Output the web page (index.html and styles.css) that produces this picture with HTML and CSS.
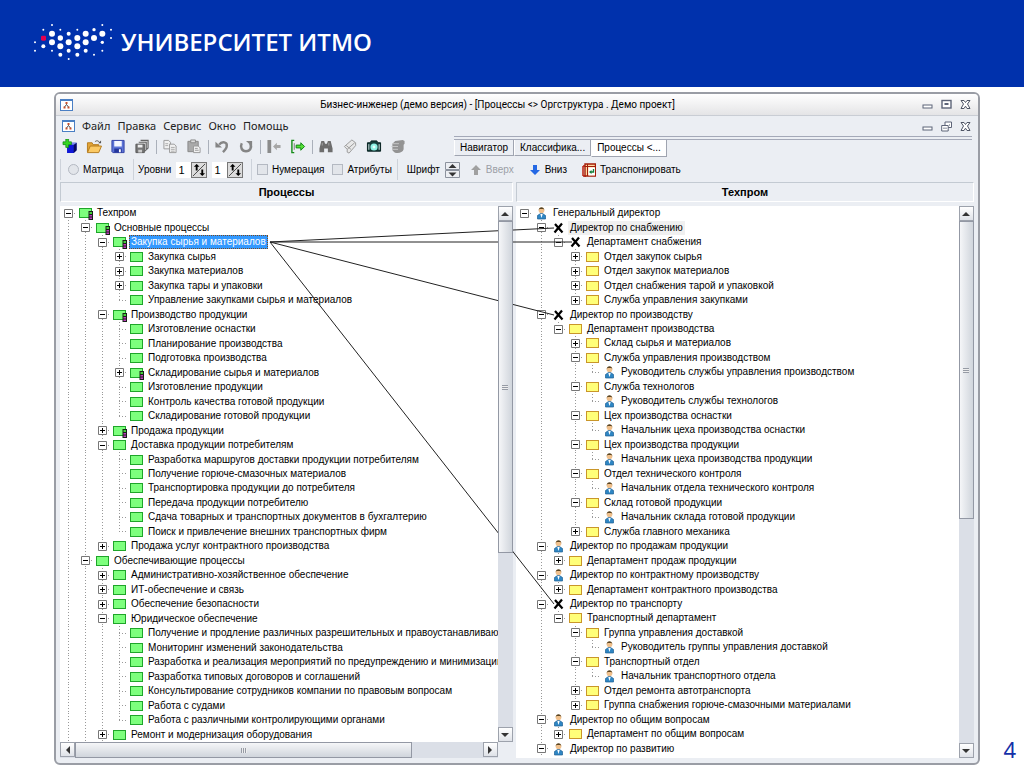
FILE: index.html
```html
<!DOCTYPE html>
<html lang="ru">
<head>
<meta charset="utf-8">
<title>Бизнес-инженер</title>
<link rel="stylesheet" href="styles.css">
</head>
<body>
<header class="banner">
  <svg class="banner-logo" viewBox="38 70 240 114" aria-hidden="true">
    <g id="dots" fill="#fff"></g>
    <rect x="62" y="108" width="15" height="15" rx="4" fill="#e3004f"/>
  </svg>
  <h1 class="banner-title">УНИВЕРСИТЕТ ИТМО</h1>
</header>
<main class="slide">
  <section class="window">
    <div class="titlebar">
      <svg class="app-icon" viewBox="0 0 13 12"><rect x=".5" y=".5" width="12" height="11" fill="#fff" stroke="#4a7fc4"/><path d="M1 1.500h11" stroke="#4a7fc4"/><path d="M6.500 3.500v2M4.500 8l2-2.500 2 2.500" stroke="#555" fill="none"/><path d="M5.500 3h2v2h-2zM3.500 7.500h2v2h-2zM7.500 7.500h2v2h-2z" fill="#c8502a"/></svg>
      <h2 class="window-title">Бизнес-инженер (демо версия) - [Процессы &lt;&gt; Оргструктура . Демо проект]</h2>
      <div class="window-buttons">
        <button aria-label="Свернуть"><svg viewBox="0 0 11 11"><rect x="1" y="6" width="9" height="3" fill="#fff" stroke="#5d6478"/></svg></button>
        <button aria-label="Развернуть"><svg viewBox="0 0 11 11"><rect x="1" y="1.500" width="9" height="7.500" fill="#fff" stroke="#5d6478" stroke-width="1.400"/><path d="M3.500 4h4v2h-4z" fill="#5d6478"/></svg></button>
        <button aria-label="Закрыть"><svg viewBox="0 0 11 11"><path d="M1 1.500h3l1.500 2 1.500-2h3L7.500 5 10 9.500H7L5.500 7.200 4 9.500H1L3.500 5z" fill="#fff" stroke="#4f5566"/></svg></button>
      </div>
    </div>
    <div class="menubar">
      <svg class="app-icon" viewBox="0 0 13 12"><rect x=".5" y=".5" width="12" height="11" fill="#fff" stroke="#4a7fc4"/><path d="M1 1.500h11" stroke="#4a7fc4"/><path d="M6.500 3.500v2M4.500 8l2-2.500 2 2.500" stroke="#555" fill="none"/><path d="M5.500 3h2v2h-2zM3.500 7.500h2v2h-2zM7.500 7.500h2v2h-2z" fill="#c8502a"/></svg>
      <nav class="menu">
        <button>Файл</button><button>Правка</button><button>Сервис</button><button>Окно</button><button>Помощь</button>
      </nav>
      <div class="window-buttons">
        <button aria-label="Свернуть документ"><svg viewBox="0 0 11 11"><rect x="1" y="6" width="9" height="3" fill="#fff" stroke="#5d6478"/></svg></button>
        <button aria-label="Восстановить документ"><svg viewBox="0 0 11 11"><path d="M4 1h6.500v5.500H4z" fill="#fff" stroke="#5d6478"/><path d="M.7 4.500h6.500V10H.7z" fill="#fff" stroke="#5d6478"/><path d="M2.500 6.500h1v1.500h-1zM4.500 6.500h1v1.500h-1zM8 3.500h1v1H8z" fill="#5d6478"/></svg></button>
        <button aria-label="Закрыть документ"><svg viewBox="0 0 11 11"><path d="M1 1.500h3l1.500 2 1.500-2h3L7.500 5 10 9.500H7L5.500 7.200 4 9.500H1L3.500 5z" fill="#fff" stroke="#4f5566"/></svg></button>
      </div>
    </div>
    <div class="tools">
      <div class="toolbar">
        <button aria-label="Создать"><svg viewBox="0 0 16 16"><path d="M5 6l3-2h7v8l-3 3H5z" fill="#1626b8"/><path d="M5 6h7v9H5z" fill="#1018d8"/><path d="M12 6l3-2v8l-3 3z" fill="#06085e"/><path d="M5 6l3-2h7l-3 2z" fill="#7d8df0"/><path d="M3.500 0h3v3h3v3h-3v3h-3V6h-3V3h3z" fill="#35d622" stroke="#0b7a10" stroke-width=".7"/></svg></button>
        <button aria-label="Открыть"><svg viewBox="0 0 16 16"><path d="M1 14V4h5l1 2h6v2" fill="#e2a436" stroke="#b37a1c"/><path d="M1 14.500L4 7.500h12L13 14.500z" fill="#fbc964" stroke="#b37a1c"/><path d="M9 3c2-2 4-1 5 1" fill="none" stroke="#555"/><path d="M12.500 4.500h3V1.500z" fill="#555"/></svg></button>
        <button aria-label="Сохранить"><svg viewBox="0 0 16 16"><path d="M1.500 1.500h13v13h-12l-1-1z" fill="#5d74d6" stroke="#3140a4"/><path d="M4 2h8v6H4z" fill="#f4f6ff"/><path d="M4 10h8v4.500H4z" fill="#24369c"/><path d="M9 11h2v3H9z" fill="#fff"/></svg></button>
        <button aria-label="Сохранить все"><svg viewBox="0 0 16 16"><path d="M6.500 1.500h8v8l-1.500 1.500M4.500 3.500h8v8L11 13" fill="#ddd" stroke="#666" stroke-width="1.200"/><path d="M1.500 5.500h9v9h-9z" fill="#777" stroke="#555"/><path d="M3.500 6h5v3h-5z" fill="#eee"/><path d="M4 11.500h4v3H4z" fill="#ccc"/></svg></button>
        <i class="separator"></i>
        <button aria-label="Копировать"><svg viewBox="0 0 16 16"><g fill="#f0f0f0" stroke="#999"><path d="M1.500 1.500h5l2 2v7h-7z"/><path d="M7.500 5.500h5l2 2v7h-7z"/></g><path d="M3 5h3M3 7h3M9 9h4M9 11h4M9 13h4" stroke="#aaa"/></svg></button>
        <button aria-label="Вставить"><svg viewBox="0 0 16 16"><path d="M1.500 2.500h11v11h-11z" fill="#aaa" stroke="#888"/><path d="M4.500 1h5v3h-5z" fill="#ddd" stroke="#888"/><path d="M7.500 7.500h5l2 2v5h-7z" fill="#f2f2f2" stroke="#999"/><path d="M9 10h3M9 12h4" stroke="#999"/></svg></button>
        <i class="separator"></i>
        <button aria-label="Отменить"><svg viewBox="0 0 16 16"><path d="M5 6c3-4 9-3 8 2 0 2-2 4-4 6" fill="none" stroke="#858585" stroke-width="2.600"/><path d="M1 3v6h7z" fill="#858585"/></svg></button>
        <button aria-label="Повторить"><svg viewBox="0 0 16 16"><path d="M3.500 4.500c-2 4 0 8.500 4.500 8.500s6.500-4 4.500-8" fill="none" stroke="#858585" stroke-width="2.600"/><path d="M8 2h6.500v6z" fill="#858585"/></svg></button>
        <i class="separator"></i>
        <button aria-label="Левая панель"><svg viewBox="0 0 16 16"><path d="M1 1h4v14H1z" fill="#8b8b8b"/><path d="M7 8l4-4v2.500h4v3h-4V12z" fill="#a7a7a7"/></svg></button>
        <button aria-label="Правая панель"><svg viewBox="0 0 16 16"><path d="M4 1.500H1.500v13H4" fill="none" stroke="#158c18" stroke-width="1.500"/><path d="M4 4.500v7" stroke="#777"/><path d="M15 8l-4-4v2.500H6v3h5V12z" fill="#56df38" stroke="#0b8210"/></svg></button>
        <i class="separator"></i>
        <button aria-label="Найти"><svg viewBox="0 0 16 16"><path d="M3 2h3l1 3h2l1-3h3l2 8v4h-5v-4H6v4H1v-4z" fill="#6d6d6d"/><path d="M4 4v3M11 4v3" stroke="#a5a5a5"/></svg></button>
        <button aria-label="Свойства"><svg viewBox="0 0 16 16"><path d="M2 8l8-7 4 3v3l-7 8-2-1v-3z" fill="#e8e8e8" stroke="#999"/><path d="M5 11l8-7M4 7l5 4" stroke="#999"/></svg></button>
        <button aria-label="Снимок"><svg viewBox="0 0 16 16"><path d="M1 4h3l1-2h6l1 2h3v9H1z" fill="#163e3c" stroke="#001c1b"/><path d="M2.500 5.500v6M13.500 5.500v6" stroke="#d8e7e5"/><circle cx="8" cy="8.500" r="3.800" fill="#8ef2e5"/><circle cx="8" cy="8.500" r="1.500" fill="#e9fffb"/></svg></button>
        <button aria-label="Выгрузить"><svg viewBox="0 0 16 16"><path d="M5 2l8-1 2 1v3l-1 1v5c-1 4-7 5-10 3L2 12V5z" fill="#939393"/><path d="M2 5h7M1 8h7M2 11h6" stroke="#c9c9c9"/></svg></button>
      </div>
      <div class="tabs" role="tablist">
        <button role="tab">Навигатор</button><button role="tab">Классифика...</button><button role="tab" class="active" aria-selected="true">Процессы &lt;...</button>
      </div>
    </div>
    <div class="options">
      <div class="group group-matrix"><label><input type="radio" name="mode">Матрица</label></div>
      <div class="group group-levels">
        <label for="level-a">Уровни</label>
        <span class="stepper"><input id="level-a" type="text" value="1"><button aria-label="Изменить первый уровень"><svg viewBox="0 0 15 15"><path d="M1 14L14 1" stroke="#444"/><path d="M5 1L2 4h2v4h2V4h2zM11 14l3-3h-2V7h-2v4H8z"/></svg></button></span>
        <span class="stepper"><input type="text" value="1" aria-label="Второй уровень"><button aria-label="Изменить второй уровень"><svg viewBox="0 0 15 15"><path d="M1 14L14 1" stroke="#444"/><path d="M5 1L2 4h2v4h2V4h2zM11 14l3-3h-2V7h-2v4H8z"/></svg></button></span>
      </div>
      <div class="group group-checks">
        <label><input type="checkbox">Нумерация</label>
        <label><input type="checkbox">Атрибуты</label>
      </div>
      <div class="group group-actions">
        <span>Шрифт</span>
        <button class="font-spin" aria-label="Размер шрифта"><svg viewBox="0 0 15 16"><path d="M.5.5h14v7H.5zM.5 8.500h14v7H.5z" fill="#eceef2" stroke="#8c929d"/><path d="M3.500 6h8l-4-4zM3.500 10.500h8l-4 4z" fill="#333"/></svg></button>
        <button class="action" disabled><svg viewBox="0 0 12 12"><path d="M6 1l5 5H8v5H4V6H1z" fill="#a0a0a0"/></svg>Вверх</button>
        <button class="action"><svg viewBox="0 0 12 12"><path d="M6 11l5-5H8V1H4v5H1z" fill="#2468e4"/></svg>Вниз</button>
        <button class="action"><svg class="wide" viewBox="0 0 14 14"><path d="M1 3v10M1 3h2M1 13h3" stroke="#bb1f0b" stroke-width="1.500" fill="none"/><path d="M3 1h10.500v12H3z" fill="#ffd9a0" stroke="#a31c08" stroke-width="1.400"/><path d="M3 3.500h10M5.500 1v12" stroke="#a31c08"/><path d="M6.500 4.500H13v8H6.500z" fill="#fff"/><path d="M11.500 6v3H8.500" stroke="#15803c" stroke-width="1.400" fill="none"/><path d="M7 9l2.500-2v4z" fill="#15803c"/></svg>Транспонировать</button>
      </div>
    </div>
    <div class="panes">
      <h3 class="pane-title">Процессы</h3>
      <h3 class="pane-title">Техпром</h3>
      <div class="trees">
        <svg class="links" aria-hidden="true"><path d="M210 36L494 22M210 36H512M210 36L494 109M210 36L494 398"/></svg>
        <div class="pane">
          <ul class="tree" id="processes" role="tree"></ul>
          <div class="vbar vbar-left"><button aria-label="Вверх"><i class="tri up"></i></button><div class="thumb"></div><button aria-label="Вниз"><i class="tri down"></i></button></div>
          <div class="hbar"><button aria-label="Влево"><i class="tri left"></i></button><div class="thumb"></div><button aria-label="Вправо"><i class="tri right"></i></button></div>
        </div>
        <div class="pane pane-right">
          <ul class="tree" id="structure" role="tree"></ul>
          <div class="vbar vbar-right"><button aria-label="Вверх"><i class="tri up"></i></button><div class="thumb"></div><button aria-label="Вниз"><i class="tri down"></i></button></div>
        </div>
      </div>
    </div>
  </section>
  <aside class="page-number">4</aside>
</main>
<script src="tree.js"></script>
</body>
</html>
```

FILE: styles.css
```css
* { box-sizing: border-box; }

body {
  margin: 0;
  min-height: 100vh;
  display: flex;
  flex-direction: column;
  background: #fff;
  color: #000;
  font-family: "Liberation Sans", Arial, sans-serif;
  font-size: 10px;
  line-height: 14px;
}

h1, h2, h3, ul { margin: 0; padding: 0; font-weight: normal; }
ul { list-style: none; }

button {
  margin: 0;
  padding: 0;
  border: 0;
  background: none;
  color: inherit;
  font: inherit;
}

button svg { display: block; }

/* Banner */
.banner {
  height: 87px;
  flex: none;
  display: flex;
  align-items: center;
  gap: 8px;
  padding: 0 33px 3px;
  background: #0031ac;
  color: #fff;
}
.banner-logo { width: 80px; height: 38px; }
.banner-title {
  font-family: "Open Sans", "Noto Sans", sans-serif;
  font-size: 24px;
  line-height: 32px;
  font-weight: 600;
}

.slide { flex: 1; display: flex; padding: 5px 0 2px 54px; }
.page-number {
  width: 44px;
  align-self: flex-end;
  padding-right: 8px;
  text-align: right;
  color: #1430a8;
  font-family: "Noto Sans", sans-serif;
  font-size: 22px;
  line-height: 32px;
}

/* Window frame */
.window {
  flex: 1;
  min-width: 0;
  display: flex;
  flex-direction: column;
  border: 2px solid #9a9da5;
  border-radius: 6px;
  background: #ebeef3;
  overflow: hidden;
}
.titlebar, .menubar { flex: none; display: flex; align-items: center; }
.titlebar {
  height: 22px;
  padding: 0 7px 0 4px;
  border-bottom: 1px solid #c9cdd4;
  background: linear-gradient(#fff, #e4e4e6);
}
.app-icon { width: 13px; height: 12px; flex: none; }
.window-title {
  flex: 1;
  text-align: center;
  font-family: Roboto, sans-serif;
  font-size: 10px;
}
.window-buttons { display: flex; gap: 8px; }
.window-buttons svg { width: 11px; height: 11px; }
.menubar { height: 20px; padding: 0 7px 0 6px; }
.menu {
  flex: 1;
  display: flex;
  gap: 7px;
  padding-left: 7px;
  font-family: "Noto Sans", sans-serif;
  font-size: 11px;
  color: #222;
}

/* Toolbar and tabs */
.tools { flex: none; display: flex; height: 21px; }
.toolbar { width: 398px; flex: none; display: flex; align-items: center; gap: 8px; padding-left: 6px; }
.toolbar svg { width: 16px; height: 15px; }
.separator { width: 1px; height: 14px; margin: 0 -3px 0 -2px; background: #aab0ba; }
.tabs {
  flex: 1;
  display: flex;
  align-items: flex-start;
  margin-right: 6px;
  border-top: 4px double #a4a9b8;
}
.tabs button {
  height: 16px;
  padding: 0 5px;
  border: 1px solid #9fa4b0;
  border-top: 0;
  border-left-color: #fff;
}
.tabs .active { height: 17px; background: #fff; }

/* Options */
.options { flex: none; display: flex; align-items: center; height: 25px; padding-left: 4px; }
.options label, .group { display: flex; align-items: center; }
.group { height: 21px; gap: 5px; padding: 0 5px; border-left: 1px solid #cdd2da; white-space: nowrap; }
.group-matrix { width: 73px; }
.group-levels { width: 118px; padding: 0 4px; }
.options input[type="radio"], .options input[type="checkbox"] {
  appearance: none;
  width: 11px;
  height: 11px;
  margin: 0 4px 0 0;
  border: 1px solid #b4b9c2;
  background: #e2e5ea;
}
.options input[type="radio"] { border-radius: 50%; margin-left: 2px; }
.group-checks { gap: 8px; }
.stepper { display: flex; }
.stepper input {
  width: 15px;
  height: 16px;
  padding: 0 0 0 2px;
  border: 0;
  background: #fff;
  font: inherit;
  font-size: 11px;
}
.stepper button { width: 16px; height: 16px; border: 1px solid #777; background: #dcdcdc; }
.stepper svg { width: 14px; height: 14px; }
.font-spin { width: 15px; height: 16px; }
.action { display: flex; align-items: center; gap: 4px; padding: 0 5px; }
.action:disabled { color: #9b9fa6; }
.action svg { width: 12px; height: 12px; }
.action .wide { width: 14px; height: 14px; }
.group-actions { padding-left: 9px; }

/* Pane captions and trees */
.panes {
  flex: 1;
  display: grid;
  grid-template-columns: 454fr 459fr;
  grid-template-rows: 20px 1fr;
  gap: 4px 3px;
  margin: 0 4px 5px 4px;
}
.pane-title {
  border: 1px solid #c3cad2;
  border-right-color: #fff;
  border-bottom-color: #fff;
  text-align: center;
  font-size: 11px;
  font-weight: bold;
  line-height: 18px;
}
.trees {
  grid-column: 1 / 3;
  position: relative;
  display: grid;
  grid-template-columns: 454fr 459fr;
  gap: 3px;
}
.pane {
  min-width: 0;
  display: grid;
  grid-template-columns: minmax(0, 1fr) 15px;
  grid-template-rows: 1fr 16px;
}
.pane-right { grid-template-rows: 1fr; }
.pane-right .tree { padding-bottom: 2px; }
.tree {
  display: grid;
  grid-auto-rows: minmax(14px, 1fr);
  background: #fff;
  overflow: hidden;
}
.links {
  position: absolute;
  inset: 0;
  width: 100%;
  height: 100%;
  z-index: 1;
  pointer-events: none;
}
.links path { fill: none; stroke: #222; }

.row { display: flex; align-items: center; white-space: nowrap; }
.cell { width: 17px; flex: none; align-self: stretch; display: grid; place-items: center; }
.guide, .corner { background: repeating-linear-gradient(#999 0 1px, transparent 1px 3px) 8px 0 / 1px 100% no-repeat; }
.corner { background-size: 1px 50%; }
.stub { background: repeating-linear-gradient(90deg, #999 0 1px, transparent 1px 3px) 8px 50% / 9px 1px no-repeat; }
.guide.stub {
  background:
    repeating-linear-gradient(#999 0 1px, transparent 1px 3px) 8px 0 / 1px 100% no-repeat,
    repeating-linear-gradient(90deg, #999 0 1px, transparent 1px 3px) 8px 50% / 9px 1px no-repeat;
}
.corner.stub {
  background:
    repeating-linear-gradient(#999 0 1px, transparent 1px 3px) 8px 0 / 1px 50% no-repeat,
    repeating-linear-gradient(90deg, #999 0 1px, transparent 1px 3px) 8px 50% / 9px 1px no-repeat;
}
.expander { width: 9px; height: 9px; }
.expander svg { width: 9px; height: 9px; }
.icon svg { width: 15px; height: 14px; display: block; }
.label { margin-left: 1px; padding: 0 2px; line-height: 14px; }
.label.selected { background: #3399ff; color: #fff; outline: 1px dotted #7a4a20; outline-offset: -1px; }
.label.marked { background: #f0f0f0; }

/* Scroll bars */
.vbar, .hbar { position: relative; z-index: 2; display: flex; background: #dbdfe7; }
.vbar { flex-direction: column; }
.vbar button, .hbar button {
  flex: none;
  display: grid;
  place-items: center;
  width: 15px;
  height: 15px;
  border: 1px solid #9da2ac;
  background: linear-gradient(#fff, #dfe2e8);
}
.thumb { display: grid; place-items: center; border: 1px solid #9398a4; background: linear-gradient(90deg, #f5f6f8, #d0d5dc); }
.thumb::after { content: ""; width: 6px; height: 5px; background: repeating-linear-gradient(#969ba5 0 1px, #eee 1px 2px); }
.vbar .thumb + button { margin-top: auto; }
.vbar-left .thumb { height: 62%; }
.vbar-right .thumb { height: 54%; }
.hbar { grid-column: 1; }
.hbar .thumb { width: 77%; background: linear-gradient(#f5f6f8, #d0d5dc); }
.hbar .thumb::after { background: repeating-linear-gradient(90deg, #969ba5 0 1px, #eee 1px 2px); }
.hbar .thumb + button { margin-left: auto; }
.tri { border: 4px solid transparent; }
.tri.up { border-top: 0; border-bottom-color: #333; }
.tri.down { border-bottom: 0; border-top-color: #333; }
.tri.left { border-left: 0; border-right-color: #333; }
.tri.right { border-right: 0; border-left-color: #333; }
```

FILE: tree.js
```js
// Logo dots: x, y, radius
const dots = [
  [95,76,3],[246,76,3],[69,90,3],[120,90,3],[171,90,3],[221,90,5],[272,90,3],
  [95,102,9],[145,102,6],[196,102,9],[246,102,9],
  [120,115,8],[171,115,9],[221,115,9],[272,115,3],
  [44,128,3],[95,128,9],[145,128,9],[196,128,9],[246,128,5],
  [69,140,6],[120,140,9],[171,140,9],
  [44,153,3],[95,153,3],[145,153,6],[196,153,6],[246,153,3],
  [120,165,6],[171,165,6],[221,165,3],[145,178,3]
];
document.getElementById("dots").innerHTML =
  dots.map(([x, y, r]) => `<circle cx="${x}" cy="${y}" r="${r}"/>`).join("");

const box = (fill, edge, extra = "") =>
  `<svg viewBox="0 0 15 14"><rect x="1.5" y="2.5" width="12" height="9" fill="${fill}" stroke="${edge}"/>${extra}</svg>`;
const icons = {
  g: box("#7dff7d", "#1fa52a"),
  f: box("#7dff7d", "#1fa52a", '<path d="M10.500 5h4.500v9h-4.500z" fill="#182018"/><path d="M11.500 6h2.500v2h-2.500z" fill="#45d13c"/><path d="M11.500 9h2.500v1.500h-2.500zM11.500 11.500h2.500V13h-2.500z" fill="#c03cc0"/>'),
  y: box("#ffff78", "#c9962a"),
  p: '<svg viewBox="0 0 15 14"><path d="M3.500 13V9.500l3-2h2l3 2V13z" fill="#2e86c4" stroke="#1d5f94" stroke-width=".7"/><path d="M6.300 8L7.500 12 8.700 8z" fill="#fff"/><circle cx="7.500" cy="4.500" r="2.800" fill="#f0c08c"/><path d="M4.700 4.500C4.500 0 10.500 0 10.300 4.500L9.500 3h-4z" fill="#5b4522"/></svg>',
  x: '<svg viewBox="0 0 15 14"><path d="M4 3l7.500 8.500M11 2.500L3.500 11.500" stroke="#000" stroke-width="2.200" fill="none"/></svg>'
};

// Each line: depth, icon, expander state (+, - or .), label
const processes = `
0f-Техпром
1f-Основные процессы
2f-*Закупка сырья и материалов
3g+Закупка сырья
3g+Закупка материалов
3g+Закупка тары и упаковки
3g.Управление закупками сырья и материалов
2f-Производство продукции
3g.Изготовление оснастки
3g.Планирование производства
3g.Подготовка производства
3f+Складирование сырья и материалов
3g.Изготовление продукции
3g.Контроль качества готовой продукции
3g.Складирование готовой продукции
2f+Продажа продукции
2g-Доставка продукции потребителям
3g.Разработка маршругов доставки продукции потребителям
3g.Получение горюче-смазочных материалов
3g.Транспортировка продукции до потребителя
3g.Передача продукции потребителю
3g.Сдача товарных и транспортных документов в бухгалтерию
3g.Поиск и привлечение внешних транспортных фирм
2g+Продажа услуг контрактного производства
1g-Обеспечивающие процессы
2g+Административно-хозяйственное обеспечение
2g+ИТ-обеспечение и связь
2g+Обеспечение безопасности
2g-Юридическое обеспечение
3g.Получение и продление различных разрешительных и правоустанавливающ
3g.Мониторинг изменений законодательства
3g.Разработка и реализация мероприятий по предупреждению и минимизации
3g.Разработка типовых договоров и соглашений
3g.Консультирование сотрудников компании по правовым вопросам
3g.Работа с судами
3g.Работа с различными контролирующими органами
2g+Ремонт и модернизация оборудования`;

const structure = `
0p-Генеральный директор
1x-#Директор по снабжению
2x-Департамент снабжения
3y+Отдел закупок сырья
3y+Отдел закупок материалов
3y+Отдел снабжения тарой и упаковкой
3y+Служба управления закупками
1x-Директор по производству
2y-Департамент производства
3y+Склад сырья и материалов
3y-Служба управления производством
4p.Руководитель службы управления производством
3y-Служба технологов
4p.Руководитель службы технологов
3y-Цех производства оснастки
4p.Начальник цеха производства оснастки
3y-Цех производства продукции
4p.Начальник цеха производства продукции
3y-Отдел технического контроля
4p.Начальник отдела технического контроля
3y-Склад готовой продукции
4p.Начальник склада готовой продукции
3y+Служба главного механика
1p-Директор по продажам продукции
2y+Департамент продаж продукции
1p-Директор по контрактному производству
2y+Департамент контрактного производства
1x-Директор по транспорту
2y-Транспортный департамент
3y-Группа управления доставкой
4p.Руководитель группы управления доставкой
3y-Транспортный отдел
4p.Начальник транспортного отдела
3y+Отдел ремонта автотранспорта
3y+Группа снабжения горюче-смазочными материалами
1p-Директор по общим вопросам
2y+Департамент по общим вопросам
1p-Директор по развитию`;

// openDepths: levels whose branch goes on below the visible rows
function render(id, source, openDepths) {
  const rows = source.trim().split("\n").map(line => {
    const [, depth, icon, state, mark, text] = line.match(/^(\d)(\w)([-+.])([*#]?)(.*)$/);
    return { depth: +depth, icon, state, mark, text };
  });
  const continues = (i, depth) => {
    const next = rows.slice(i + 1).find(r => r.depth <= depth);
    return next ? next.depth === depth : openDepths.includes(depth);
  };
  document.getElementById(id).innerHTML = rows.map((row, i) => {
    let cells = "";
    for (let d = 0; d < row.depth; d++) {
      cells += `<span class="cell${continues(i, d) ? " guide" : ""}"></span>`;
    }
    const line = continues(i, row.depth) ? (row.depth || i ? " guide" : "") : (row.depth ? " corner" : "");
    const plus = row.state === "+" ? "M2 4.500h5M4.500 2v5" : "M2 4.500h5";
    const button = row.state === "." ? "" :
      `<button class="expander" aria-label="${row.state === "+" ? "Развернуть" : "Свернуть"} ветвь"><svg viewBox="0 0 9 9"><path d="M.5.5h8v8h-8z" fill="#fff" stroke="#777"/><path d="${plus}" stroke="#000"/></svg></button>`;
    const cls = { "*": " selected", "#": " marked" }[row.mark] || "";
    return `<li class="row" role="treeitem" aria-level="${row.depth + 1}">${cells}<span class="cell stub${line}">${button}</span><span class="cell icon">${icons[row.icon]}</span><span class="label${cls}">${row.text}</span></li>`;
  }).join("");
}

render("processes", processes, [0, 1, 2]);
render("structure", structure, [1]);
```
